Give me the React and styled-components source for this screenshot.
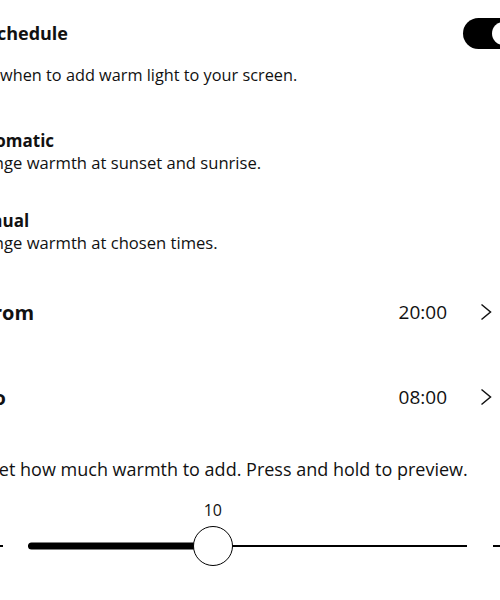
import React from "react";
import styled, { createGlobalStyle } from "styled-components";

const GlobalStyle = createGlobalStyle`
  html, body {
    margin: 0;
    padding: 0;
    background: #ffffff;
  }
  body {
    font-family: "Open Sans", "Noto Sans", sans-serif;
    color: #111111;
  }
`;

const Screen = styled.div`
  width: 500px;
  height: 600px;
  overflow: hidden;
  background: #ffffff;
`;

const Content = styled.div`
  margin-left: -11px;
  width: 530px;
  display: flex;
  flex-direction: column;
`;

const HeaderRow = styled.div`
  display: flex;
  align-items: center;
  justify-content: space-between;
  height: 32px;
  margin-top: 17px;
`;

const Title = styled.div`
  font-size: 18px;
  font-weight: 700;
  margin-left: -2px;
`;

const Toggle = styled.div`
  width: 56px;
  height: 31px;
  border-radius: 16px;
  background: #000000;
  position: relative;

  &::after {
    content: "";
    position: absolute;
    top: 4px;
    right: 4px;
    width: 23px;
    height: 23px;
    border-radius: 50%;
    background: #ffffff;
  }
`;

const Desc = styled.div`
  font-size: 16.3px;
  line-height: 22px;
  margin-left: ${(p) => p.$pull || 0}px;
  margin-top: ${(p) => p.$top || 0}px;
`;

const RadioOption = styled.div`
  display: flex;
  align-items: flex-start;
  gap: 14px;
  margin-left: -60px;
  margin-top: ${(p) => p.$top}px;
`;

const Radio = styled.div`
  width: 22px;
  height: 22px;
  border-radius: 50%;
  border: 2px solid #000;
  box-sizing: border-box;
  margin-top: 8px;
`;

const RadioText = styled.div`
  display: flex;
  flex-direction: column;
`;

const RadioLabel = styled.div`
  font-size: 17px;
  font-weight: 700;
  line-height: 22px;
`;

const RadioHint = styled.div`
  font-size: 16.6px;
  line-height: 22px;
  margin-left: -1px;
`;

const TimeRow = styled.div`
  display: flex;
  align-items: center;
  height: 40px;
  margin-top: ${(p) => p.$top}px;
  padding-right: 27px;
`;

const TimeLabel = styled.div`
  flex: 1;
  font-size: 20px;
  font-weight: 700;
  margin-left: -7px;
`;

const TimeValue = styled.div`
  font-size: 19px;
  margin-right: 33px;
`;

const Chevron = styled.svg`
  width: 12px;
  height: 18px;
`;

const SliderHint = styled.div`
  font-size: 18px;
  margin-top: 40px;
`;

const SliderBlock = styled.div`
  display: flex;
  align-items: center;
  margin-top: 41px;
  height: 48px;
`;

const EndMark = styled.div`
  width: 14px;
  height: 2px;
  background: #000;
`;

const Track = styled.div`
  flex: 0 0 439px;
  margin: 0 26px 0 25px;
  position: relative;
  height: 48px;
`;

const TrackLine = styled.div`
  position: absolute;
  top: 50%;
  height: 2px;
  transform: translateY(-50%);
  background: #000;
  left: 0;
  right: 0;
`;

const TrackFill = styled.div`
  position: absolute;
  top: 50%;
  height: 7px;
  transform: translateY(-50%);
  background: #000;
  border-radius: 4px;
  left: 0;
`;

const Thumb = styled.div`
  position: absolute;
  top: 50%;
  width: 40px;
  height: 40px;
  border-radius: 50%;
  border: 1.5px solid #000;
  background: #fff;
  box-sizing: border-box;
  transform: translate(-50%, -50%);
`;

const ThumbValue = styled.div`
  position: absolute;
  bottom: 49px;
  transform: translateX(-50%);
  font-size: 16px;
`;

const PlusMark = styled.div`
  position: relative;
  width: 16px;
  height: 16px;

  &::before, &::after {
    content: "";
    position: absolute;
    background: #000;
  }
  &::before {
    left: 0;
    right: 0;
    top: 7px;
    height: 2px;
  }
  &::after {
    top: 0;
    bottom: 0;
    left: 7px;
    width: 2px;
  }
`;

const ChevronIcon = () => (
  <Chevron viewBox="0 0 12 18">
    <path d="M1.5 1.5 L10.5 9 L1.5 16.5" fill="none" stroke="#111" strokeWidth="1.5" />
  </Chevron>
);

export default function App() {
  const value = 10;
  const pct = 0.421;
  return (
    <Screen>
      <GlobalStyle />
      <Content>
        <HeaderRow>
          <Title>Schedule</Title>
          <Toggle />
        </HeaderRow>
        <Desc $pull={-17} $top={15}>Set when to add warm light to your screen.</Desc>

        <RadioOption $top={44}>
          <Radio />
          <RadioText>
            <RadioLabel>Automatic</RadioLabel>
            <RadioHint>Change warmth at sunset and sunrise.</RadioHint>
          </RadioText>
        </RadioOption>

        <RadioOption $top={36}>
          <Radio />
          <RadioText>
            <RadioLabel>Manual</RadioLabel>
            <RadioHint>Change warmth at chosen times.</RadioHint>
          </RadioText>
        </RadioOption>

        <TimeRow $top={38}>
          <TimeLabel>From</TimeLabel>
          <TimeValue>20:00</TimeValue>
          <ChevronIcon />
        </TimeRow>

        <TimeRow $top={45}>
          <TimeLabel>To</TimeLabel>
          <TimeValue>08:00</TimeValue>
          <ChevronIcon />
        </TimeRow>

        <SliderHint>Set how much warmth to add. Press and hold to preview.</SliderHint>

        <SliderBlock>
          <EndMark />
          <Track>
            <TrackLine />
            <TrackFill style={{ width: `${pct * 100}%` }} />
            <Thumb style={{ left: `${pct * 100}%` }} />
            <ThumbValue style={{ left: `${pct * 100}%` }}>{value}</ThumbValue>
          </Track>
          <PlusMark />
        </SliderBlock>
      </Content>
    </Screen>
  );
}
